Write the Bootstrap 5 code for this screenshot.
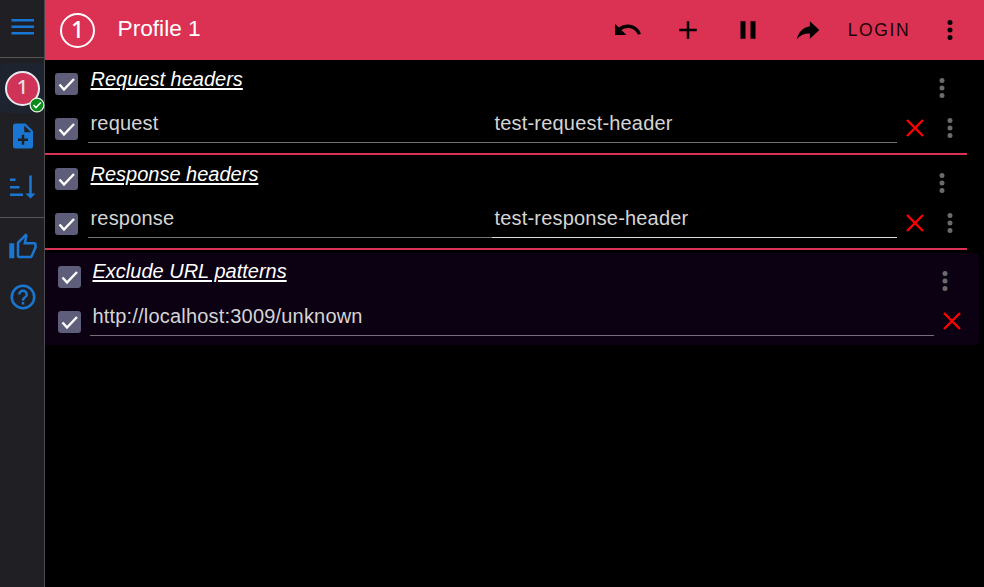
<!DOCTYPE html>
<html lang="en">
<head>
<meta charset="utf-8">
<meta name="viewport" content="width=device-width, initial-scale=1">
<title>Profile 1</title>
<link href="https://cdn.jsdelivr.net/npm/bootstrap@5.3.0/dist/css/bootstrap.min.css" rel="stylesheet">
<style>
  body { background: #000; color: #fff; font: 20px/24px "Liberation Sans", Arial, sans-serif; height: 587px; }
  svg { display: block; fill: currentColor; }
  .side { width: 45px; background: #202024; border-right: 1px solid #4b4b4f; color: #1976d2; }
  .side-top { height: 58px; padding: 12px 0 0 1px; border-bottom: 1px solid #555; }
  .side-slot { height: 50px; padding-left: 1px; }
  .side-profile { height: 50px; margin-top: 5px; background: #1d242f; border-radius: 6px 0 0 6px; padding-left: 5px; }
  .side-profiles { height: 160px; border-bottom: 1px solid #555; }
  .disc { width: 35px; height: 35px; border: 2px solid #fff; border-radius: 50%; font: 500 23px/28px "Noto Sans", sans-serif; text-align: center; color: #fff; }
  .side .disc { background: #cf3358; border-color: #e8eaf0; color: #e6dfe4; font-size: 20px; line-height: 28px; }
  .tick-badge { right: -1px; bottom: 0; }
  .topbar { height: 60px; background: #db3153; padding-left: 15px; }
  .topbar h1 { font-size: 22.7px; line-height: 28px; margin: 0 0 5px 22.5px; font-weight: 400; }
  .tool { width: 60px; color: #000; }
  .login { width: 82px; font-size: 17.5px; letter-spacing: 1.6px; color: #1c0509; }
  .rules { width: 922px; padding: 1px 0 2px 10px; border-bottom: 2px solid #db3153; }
  .excludes { width: 934px; margin-top: 3px; padding: 1px 0 1px 13px; background: #0c0013; border-radius: 0 4px 4px 0; }
  .line { height: 45px; }
  .box { width: 23px; height: 22px; margin: 12px 10px 0 0; border-radius: 3px; background: #5e5e7a; flex: none; }
  .head { font-style: italic; text-decoration: underline; text-decoration-thickness: 2px; text-underline-offset: 2px; margin: 6px 0 0 2.5px; }
  .excludes .head { margin: 5px 0 0 1.5px; }
  .field { width: 404px; height: 37px; padding: 5px 0 0 2.5px; border-bottom: 1px solid #727272; color: #d5d5d5; letter-spacing: .19px; }
  .field.last { width: 405px; }
  .field.lit { border-color: #ddd; }
  .field.wide { width: 844px; margin-left: -1px; border-color: #756d78; }
  .more { color: #6b6b6b; margin-top: 7px; }
  .line .kill { color: #f00; margin: 7px 0 0 3px; }
  .row-more { margin-right: 2px; }
  .head-more { margin-top: 12px; margin-right: 10px; }
  .excludes .head-more { margin-right: 19px; }
</style>
<script src="https://cdn.jsdelivr.net/npm/bootstrap@5.3.0/dist/js/bootstrap.bundle.min.js"></script>
</head>
<body class="d-flex overflow-hidden">
<svg class="d-none">
  <symbol id="dots" viewBox="0 0 24 24"><path d="M12 16a2 2 0 1 1 0 4 2 2 0 0 1 0-4m0-6a2 2 0 1 1 0 4 2 2 0 0 1 0-4m0-6a2 2 0 1 1 0 4 2 2 0 0 1 0-4"/></symbol>
  <symbol id="check" viewBox="0 0 23 22"><path d="M4.500 11.500 9 16.500 19 6" fill="none" stroke="#fff" stroke-width="2.400"/></symbol>
  <symbol id="cross" viewBox="0 0 30 30"><path d="M7 7 23 23M23 7 7 23" fill="none" stroke="currentColor" stroke-width="2.400"/></symbol>
</svg>
<nav class="side d-flex flex-column flex-shrink-0">
  <div class="side-top d-flex justify-content-center">
    <svg width="30" height="30"><path d="M3.500 7H26v2.500H3.500zM3.500 13.600H26v2.500H3.500zM3.500 20H26v2.500H3.500z"/></svg>
  </div>
  <div class="side-profiles">
    <div class="side-profile d-flex align-items-center position-relative">
      <div class="disc">1</div>
      <svg class="tick-badge position-absolute" width="16" height="16"><circle cx="8" cy="8" r="6.900" fill="#0a8a1a" stroke="#e8f5e8" stroke-width="1.200"/><path d="M4.400 8 7 10.600 11.800 5.600" fill="none" stroke="#fff" stroke-width="1.500"/></svg>
    </div>
    <div class="side-slot d-flex align-items-center justify-content-center pb-1">
      <svg width="30" height="30" viewBox="0 0 24 24"><path d="M14 2H6a2 2 0 0 0-2 2v16a2 2 0 0 0 2 2h12a2 2 0 0 0 2-2V8zm-3 17v-3H8v-2h3v-3h2v3h3v2h-3v3zm2-10V3.500L18.500 9z"/></svg>
    </div>
    <div class="side-slot d-flex align-items-center justify-content-center">
      <svg width="30" height="30"><path d="M2 5.500h5.500V8H2zM2 13h9.500v2.500H2zM2 20.500h13V23H2zM21.200 2.500h2.600V20.500H27.500L22.500 25.500 17.500 20.500h3.700z"/></svg>
    </div>
  </div>
  <div class="side-slot d-flex align-items-center justify-content-center mt-1">
    <svg width="30" height="30" viewBox="0 0 24 24"><path d="M5 9v12H1V9zm4 12a2 2 0 0 1-2-2V9c0-.55.22-1.050.59-1.410L14.170 1l1.060 1.060c.27.27.44.64.44 1.050l-.03.32L14.690 8H21a2 2 0 0 1 2 2v2c0 .26-.05.5-.14.73l-3.020 7.050C19.540 20.500 18.830 21 18 21zm0-2h9.030L21 12v-2h-8.790l1.130-5.320L9 9.030z"/></svg>
  </div>
  <div class="side-slot d-flex align-items-center justify-content-center">
    <svg width="30" height="30" viewBox="0 0 24 24"><path d="M11 18h2v-2h-2zm1-16a10 10 0 1 0 0 20 10 10 0 0 0 0-20m0 18a8 8 0 1 1 0-16 8 8 0 0 1 0 16m0-14a4 4 0 0 0-4 4h2a2 2 0 1 1 4 0c0 2-3 1.750-3 5h2c0-2.250 3-2.500 3-5a4 4 0 0 0-4-4"/></svg>
  </div>
</nav>
<main class="flex-grow-1">
  <header class="topbar d-flex align-items-center">
    <div class="disc">1</div>
    <h1>Profile 1</h1>
    <div class="d-flex align-items-center ms-auto">
      <div class="tool d-flex justify-content-center"><svg width="30" height="30"><path d="M2 8.800 5.800 12.400C8.500 10.500 11.500 9.500 15 9.500c6 0 10.600 3.500 13 9.200l-3 1.100C23 15.500 19.500 12.900 15 12.900c-2.500 0-4.800.7-6.700 2L13.500 20H2z"/></svg></div>
      <div class="tool d-flex justify-content-center"><svg width="30" height="30" viewBox="0 0 24 24"><path d="M19 13h-6v6h-2v-6H5v-2h6V5h2v6h6z"/></svg></div>
      <div class="tool d-flex justify-content-center"><svg width="30" height="30" viewBox="0 0 24 24"><path d="M14 19h4V5h-4M6 19h4V5H6z"/></svg></div>
      <div class="tool d-flex justify-content-center"><svg width="30" height="30" viewBox="0 0 24 24"><path d="M21 12l-7.500-7v4C7 10 4 15 3 19.500c2.500-3.500 6-4.800 10.500-4.800V19z"/></svg></div>
      <div class="login text-center">LOGIN</div>
      <div class="tool d-flex justify-content-center me-1"><svg width="30" height="30"><use href="#dots"/></svg></div>
    </div>
  </header>

  <section class="rules">
    <div class="line d-flex align-items-start">
      <svg class="box"><use href="#check"/></svg>
      <div class="head">Request headers</div>
      <svg class="more head-more ms-auto" width="30" height="30"><use href="#dots"/></svg>
    </div>
    <div class="line d-flex align-items-start">
      <svg class="box"><use href="#check"/></svg>
      <div class="field">request</div>
      <div class="field last">test-request-header</div>
      <svg class="kill" width="30" height="30"><use href="#cross"/></svg>
      <svg class="more row-more ms-auto" width="30" height="30"><use href="#dots"/></svg>
    </div>
  </section>

  <section class="rules">
    <div class="line d-flex align-items-start">
      <svg class="box"><use href="#check"/></svg>
      <div class="head">Response headers</div>
      <svg class="more head-more ms-auto" width="30" height="30"><use href="#dots"/></svg>
    </div>
    <div class="line d-flex align-items-start">
      <svg class="box"><use href="#check"/></svg>
      <div class="field">response</div>
      <div class="field last lit">test-response-header</div>
      <svg class="kill" width="30" height="30"><use href="#cross"/></svg>
      <svg class="more row-more ms-auto" width="30" height="30"><use href="#dots"/></svg>
    </div>
  </section>

  <section class="excludes">
    <div class="line d-flex align-items-start">
      <svg class="box"><use href="#check"/></svg>
      <div class="head">Exclude URL patterns</div>
      <svg class="more head-more ms-auto" width="30" height="30"><use href="#dots"/></svg>
    </div>
    <div class="line d-flex align-items-start">
      <svg class="box"><use href="#check"/></svg>
      <div class="field wide">http://localhost:3009/unknown</div>
      <svg class="kill" width="30" height="30"><use href="#cross"/></svg>
    </div>
  </section>
</main>
</body>
</html>
